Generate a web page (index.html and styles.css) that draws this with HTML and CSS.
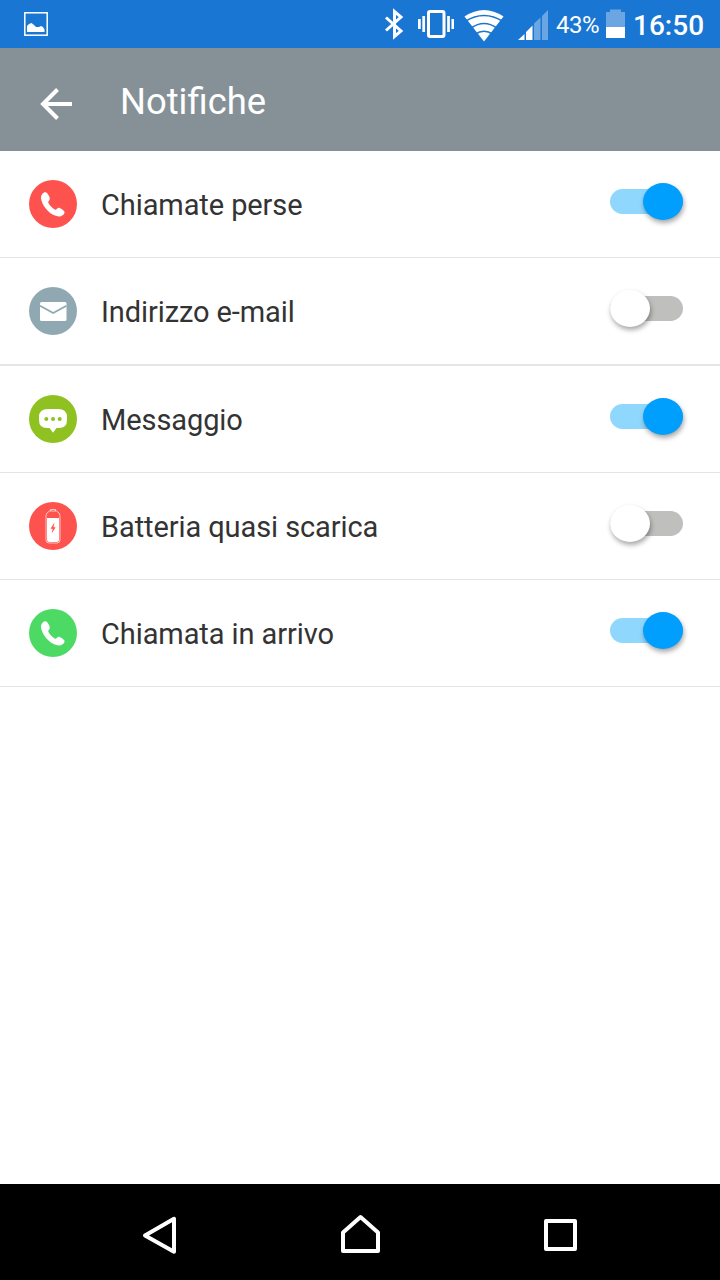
FILE: index.html
```html
<!DOCTYPE html>
<html lang="it">
<head>
  <meta charset="UTF-8" />
  <meta name="viewport" content="width=device-width, initial-scale=1.0" />
  <title>Notifiche</title>
  <link rel="stylesheet" href="styles.css">
</head>
<body>

  <div class="status-bar">
    <svg class="picture" width="24" height="24" viewBox="0 0 24 24">
      <rect x="0.8" y="0.8" width="22.4" height="22.4" fill="none" stroke="#fff" stroke-width="1.500" />
      <path d="M3 20v-6l2-2 2.500-1 2.500 2 2 2h3l2-1 2 1 1.500 2.500v2.500z" fill="#fff" />
    </svg>

    <div class="status-right">
      <svg width="20" height="48" viewBox="384 0 20 48">
        <path d="M386 17.500l15 13.500-6.500 5.500v-25l6.500 5.500-15 13.500" fill="none" stroke="#fff" stroke-width="3" />
      </svg>
      <svg class="vibrate" width="36" height="48" viewBox="418 0 36 48">
        <rect x="428.500" y="11.500" width="15.500" height="25" rx="1.500" fill="none" stroke="#fff" stroke-width="3" />
        <path d="M419.400 19v10M423.700 16v16M448.500 16v16M452.800 19v10" stroke="#fff" stroke-width="2.700" />
      </svg>
      <svg class="wifi" width="40" height="48" viewBox="464 0 40 48">
        <path d="M464.500 16.500Q484 3.500 503.500 16.500L484 41.500z" fill="#fff" />
        <path d="M465 21.500Q484 9.500 503 21.500M471 28Q484 19 497 28M475 34.500Q484 28 493 34.500" fill="none" stroke="#1976d2" stroke-width="1.700" />
      </svg>
      <svg class="signal" width="31" height="48" viewBox="518 0 31 48">
        <path d="M518 40l6.500-6v6zM526 40v-8l6.500-6.500v14.500z" fill="#fff" />
        <path d="M534 40v-16.500l6.500-6v22.500zM542 40v-24l6-6v30z" fill="#6ba6e2" />
      </svg>
      <span class="percent">43%</span>
      <svg class="battery" width="19" height="48" viewBox="606 0 19 48">
        <path d="M606 27v-15h4v-2.500h11v2.500h4v15z" fill="#6ba6e2" />
        <path d="M606 27h19v11h-19z" fill="#fff" />
      </svg>
      <span class="clock">16:50</span>
    </div>
  </div>

  <header class="toolbar">
    <svg class="back" width="34" height="34" viewBox="0 0 34 34">
      <path d="M33 17H4M18.500 2.500L4 17l14.500 14.500" fill="none" stroke="#fff" stroke-width="4" />
    </svg>
    <h1>Notifiche</h1>
  </header>

  <ul class="settings">
    <li class="row">
      <svg class="icon" width="48" height="48" viewBox="0 0 48 48">
        <circle cx="24" cy="24" r="24" fill="#fe524f" />
        <path d="M16.500 12.300C14.500 12 12.300 14.500 12 17.500C12 21 14.500 26.500 19 31C23 35 27.500 36.800 31 36.400C33.500 36 35.800 34 35.500 32C35.300 30.500 31 27.700 29.500 27.800C28.200 28 27.500 29.800 26.500 29.800C24.800 29.600 19.800 24.600 19.300 22.500C19.200 21 20.600 20.500 20.800 19C20.800 17 18.500 12.500 16.500 12.300z" fill="#fff" />
      </svg>
      <span class="label">Chiamate perse</span>
      <span class="switch on"><span class="thumb"></span></span>
    </li>
    <li class="row thick">
      <svg class="icon" width="48" height="48" viewBox="0 0 48 48">
        <circle cx="24" cy="24" r="24" fill="#90a8b2" />
        <rect x="11" y="15" width="26.500" height="19" rx="1.500" fill="#fff" />
        <path d="M11 18.800l13.200 7.200 13.300-7.200" fill="none" stroke="#90a8b2" stroke-width="1.800" />
      </svg>
      <span class="label">Indirizzo e-mail</span>
      <span class="switch"><span class="thumb"></span></span>
    </li>
    <li class="row">
      <svg class="icon" width="48" height="48" viewBox="0 0 48 48">
        <circle cx="24" cy="24" r="24" fill="#8fc120" />
        <path d="M19 14h10q9 0 9 8v3q0 8-8 8h-2.500l-3.500 4.800-3.500-4.800h-2.500q-8 0-8-8v-3q0-8 9-8z" fill="#fff" />
        <circle cx="17.300" cy="24" r="2" fill="#8fc120" />
        <circle cx="24" cy="24" r="2" fill="#8fc120" />
        <circle cx="30.700" cy="24" r="2" fill="#8fc120" />
      </svg>
      <span class="label">Messaggio</span>
      <span class="switch on"><span class="thumb"></span></span>
    </li>
    <li class="row">
      <svg class="icon" width="48" height="48" viewBox="0 0 48 48">
        <circle cx="24" cy="24" r="24" fill="#fe524f" />
        <path d="M21.500 9v-1.500h5v1.500M20.500 9h7q3.500 2 3.500 4.500v24.500q0 3-3 3h-8q-3 0-3-3v-24.500q0-2.500 3.500-4.500z" fill="none" stroke="#fff" stroke-opacity="0.650" />
        <path d="M18 16h12v21.500q0 2.500-2.500 2.500h-7q-2.500 0-2.500-2.500z" fill="#fff" />
        <path d="M25.500 20.500l-4 6.200h2.200l-1 4.800 3.900-6.200h-2.100z" fill="#fe524f" />
      </svg>
      <span class="label">Batteria quasi scarica</span>
      <span class="switch"><span class="thumb"></span></span>
    </li>
    <li class="row">
      <svg class="icon" width="48" height="48" viewBox="0 0 48 48">
        <circle cx="24" cy="24" r="24" fill="#4cd964" />
        <path d="M16.500 12.300C14.500 12 12.300 14.500 12 17.500C12 21 14.500 26.500 19 31C23 35 27.500 36.800 31 36.400C33.500 36 35.800 34 35.500 32C35.300 30.500 31 27.700 29.500 27.800C28.200 28 27.500 29.800 26.500 29.800C24.800 29.600 19.800 24.600 19.300 22.500C19.200 21 20.600 20.500 20.800 19C20.800 17 18.500 12.500 16.500 12.300z" fill="#fff" />
      </svg>
      <span class="label">Chiamata in arrivo</span>
      <span class="switch on"><span class="thumb"></span></span>
    </li>
  </ul>

  <nav class="nav-bar">
    <svg width="40" height="96" viewBox="140 0 40 96">
      <path d="M145 51.500L174 34.800v33z" />
    </svg>
    <svg width="40" height="96" viewBox="340 0 40 96">
      <path d="M343 67V48.500L360.500 33 378 48.500V67z" />
    </svg>
    <svg width="40" height="96" viewBox="540 0 40 96">
      <path d="M546 37h29v28h-29z" />
    </svg>
  </nav>

</body>
</html>
```
FILE: styles.css
```css
body {
  margin: 0;
  height: 1280px;
  display: flex;
  flex-direction: column;
  background: #fff;
  font-family: Roboto, sans-serif;
  overflow: hidden;
}

svg {
  display: block;
  flex: none;
}

.status-bar {
  height: 48px;
  padding: 0 16px 0 24px;
  display: flex;
  align-items: center;
  justify-content: space-between;
  background: #1976d2;
  color: #fff;
}

.status-right {
  display: flex;
  align-items: center;
}

.vibrate {
  margin-left: 14px;
}

.wifi {
  margin-left: 10px;
}

.signal {
  margin-left: 14px;
}

.percent {
  width: 50px;
  margin-left: 7px;
  padding-top: 2px;
  font-size: 24px;
  line-height: 28px;
  letter-spacing: -0.5px;
}

.clock {
  width: 71px;
  margin-left: 8px;
  padding-top: 3px;
  font-size: 28px;
  font-weight: 500;
  line-height: 32px;
}

.toolbar {
  height: 103px;
  display: flex;
  align-items: center;
  background: #869197;
  color: #fff;
}

.back {
  margin: 9px 0 0 39px;
}

.toolbar h1 {
  margin: 4px 0 0 47px;
  font-size: 36.4px;
  font-weight: 400;
  line-height: 42px;
}

.settings {
  flex: 1;
  margin: 0;
  padding: 0;
  list-style: none;
}

.row {
  height: 106px;
  padding: 0 37px 0 29px;
  display: flex;
  align-items: center;
  border-bottom: 1px solid #e5e5e5;
}

.row.thick {
  border-bottom-width: 2px;
}

.label {
  flex: 1;
  margin-left: 24px;
  padding-top: 2px;
  color: #333;
  font-size: 29px;
  line-height: 34px;
  letter-spacing: -0.09px;
}

.switch {
  width: 73px;
  height: 25px;
  margin-bottom: 5px;
  display: flex;
  align-items: center;
  border-radius: 13px;
  background: #bfbfbd;
}

.switch.on {
  justify-content: flex-end;
  background: #90d7fd;
}

.thumb {
  width: 40px;
  height: 37px;
  border-radius: 50%;
  background: #fff;
  box-shadow: 1px 3px 5px rgba(0, 0, 0, 0.35);
}

.on .thumb {
  background: #009efd;
}

.nav-bar {
  height: 96px;
  display: flex;
  align-items: center;
  justify-content: center;
  gap: 160px;
  background: #000;
}

.nav-bar path {
  fill: none;
  stroke: #fff;
  stroke-width: 4;
  stroke-linejoin: round;
}
```
